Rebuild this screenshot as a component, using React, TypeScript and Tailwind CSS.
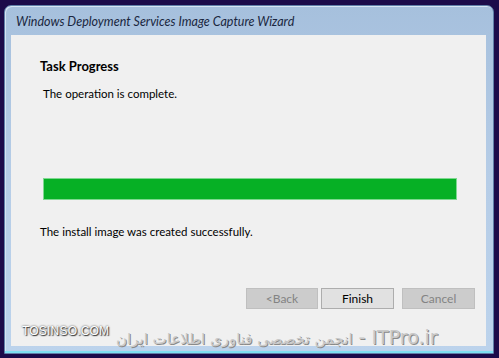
import React from "react";

export default function App() {
  const seg = { fontFamily: 'Lato, "Noto Sans", Arial, sans-serif' };
  return (
    <div className="relative w-[499px] h-[358px] bg-[#1c0b4a] pt-[5px] pl-[4px] overflow-hidden" style={seg}>
      <div className="w-[490px] h-[349px] rounded-t-[7px] border border-[#5f7fa8] bg-gradient-to-b from-[#a6c0dd] via-[#b6cde7] to-[#bcd3ec] flex flex-col shadow-[inset_1px_1px_0_#d6e4f3]">
        <div className="h-[29px] flex items-center pl-[11px] pt-[3px] shrink-0">
          <span className="italic text-[12.5px] text-[#1a2740]">
            Windows Deployment Services Image Capture Wizard
          </span>
        </div>
        <div className="flex-1 flex pl-[6px] pr-[7px] pb-[5px] min-h-0">
          <div className="flex-1 bg-[#f0f0f0] flex flex-col pl-[29px] pr-[29px] text-[#000]">
            <div className="mt-[23px] text-[13px] font-bold leading-[16px]">Task Progress</div>
            <div className="mt-[12px] ml-[3px] text-[11.5px] leading-[16px]">The operation is complete.</div>
            <div className="mt-[76px] ml-[3px] h-[22px] border border-[#7ed890] bg-[#06b025]" />
            <div className="mt-[24px] text-[11.5px] leading-[16px]">The install image was created successfully.</div>
            <div className="mt-[48px] -mr-[18px] flex justify-end">
              <button className="w-[72px] h-[21px] border border-[#bfbfbf] bg-[#cccccc] text-[12px] text-[#838383] leading-none">&lt;Back</button>
              <button className="ml-[3px] w-[73px] h-[21px] border border-[#adadad] bg-[#e1e1e1] text-[12px] text-black leading-none">Finish</button>
              <button className="ml-[8px] w-[73px] h-[21px] border border-[#bfbfbf] bg-[#cccccc] text-[12px] text-[#838383] leading-none">Cancel</button>
            </div>
          </div>
        </div>
        <div className="h-[2px] bg-[#7ee0f2] shrink-0" />
      </div>
      <div className="absolute left-[22px] top-[322px] text-[12px] text-white tracking-[0.2px] [text-shadow:0_0_2px_#333,1px_1px_1px_#333]" style={{ fontFamily: '"Liberation Sans", Arial, sans-serif' }}>
        TOSINSO.COM
      </div>
      <div dir="ltr" className="absolute left-[116px] top-[323px] text-[19px] leading-[28px] text-[#c9c9c9] whitespace-nowrap [text-shadow:1px_1px_0_#8a8a8a]" style={{ fontFamily: '"DejaVu Sans", "Noto Sans", sans-serif' }}>
        <span className="text-[15px] tracking-[0.8px]">انجمن تخصصی فناوری اطلاعات ایران</span>
        <span> - ITPro.ir</span>
      </div>
    </div>
  );
}
